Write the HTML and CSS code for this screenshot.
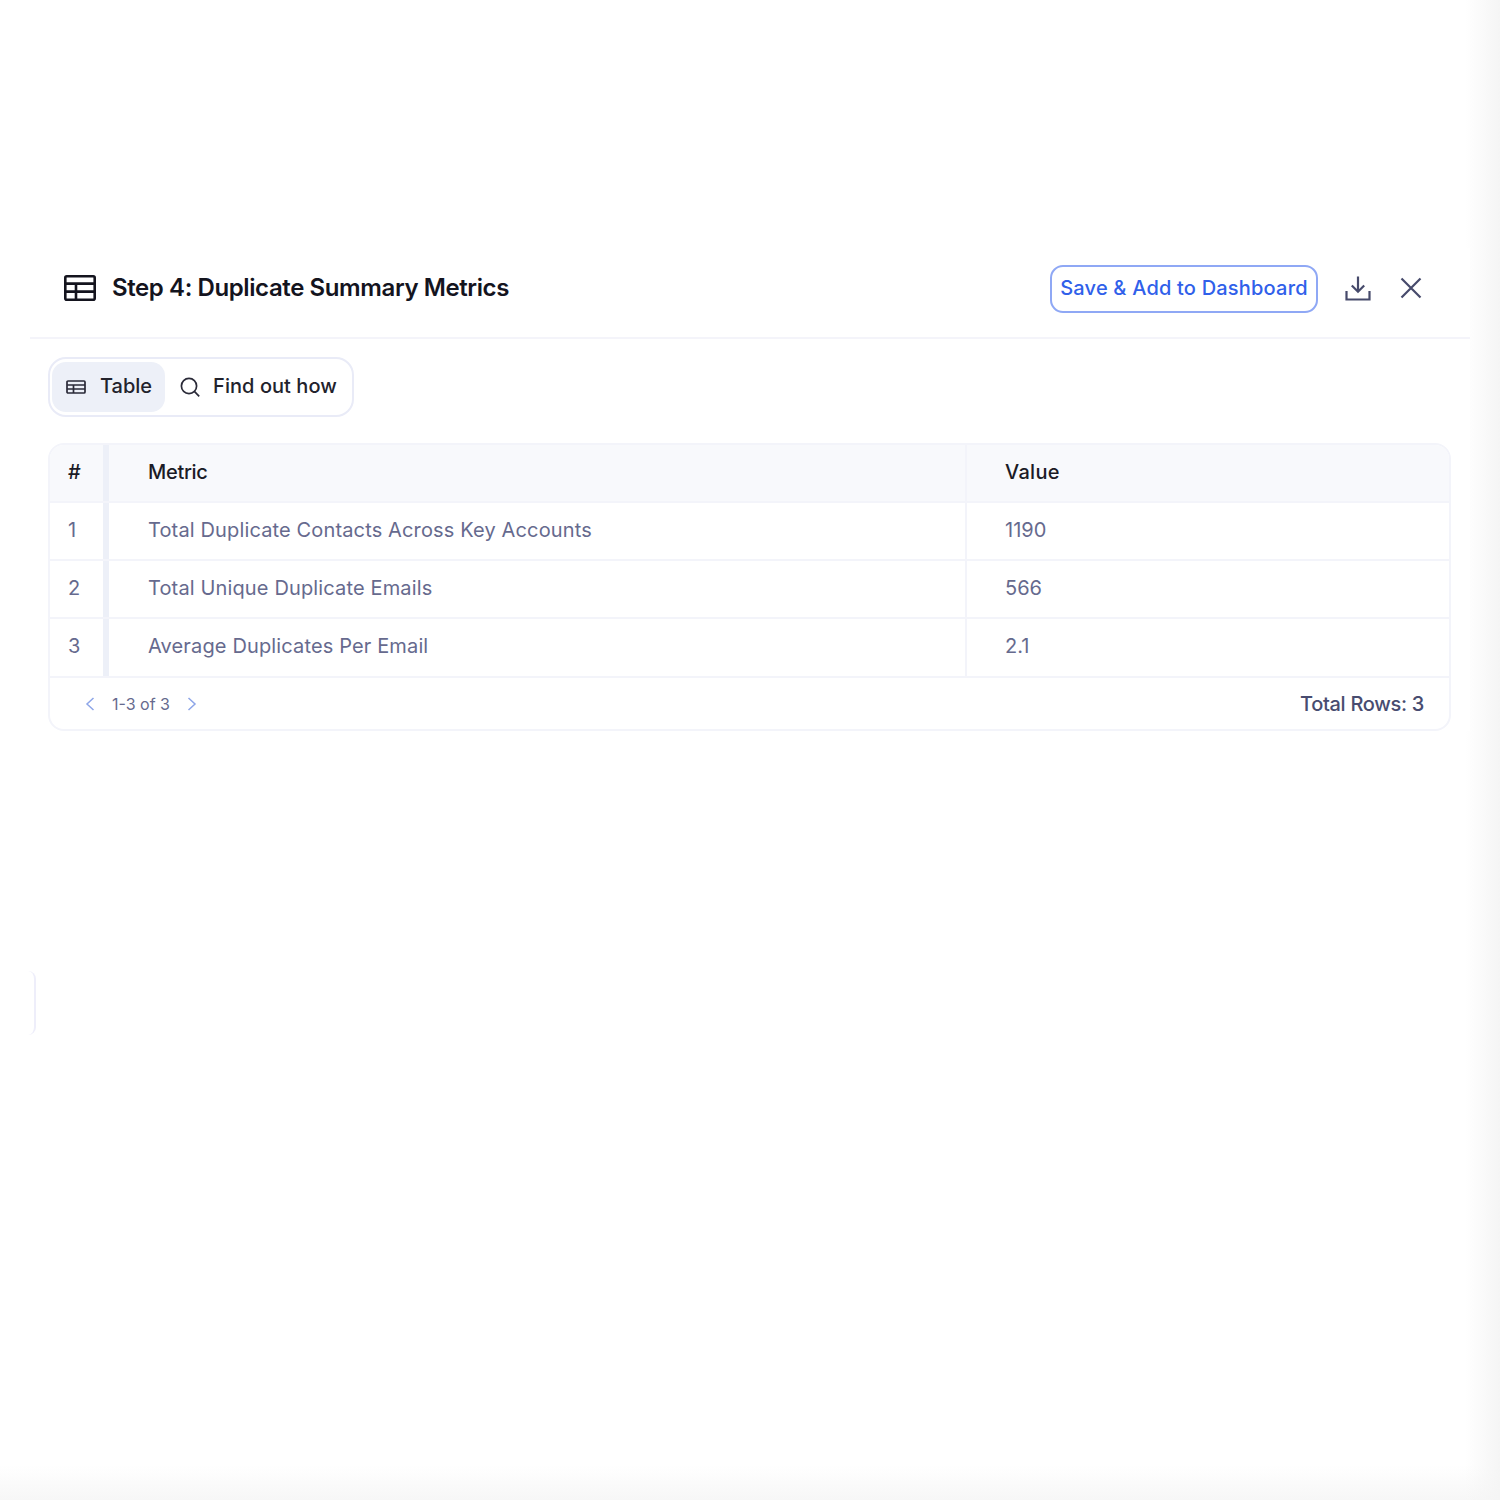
FILE: index.html
```html
<!DOCTYPE html>
<html lang="en">
<head>
<meta charset="utf-8">
<title>Step 4: Duplicate Summary Metrics</title>
<link rel="stylesheet" href="styles.css">
</head>
<body>
<div class="page">
  <span class="edge-tab"></span>
  <section class="panel">
    <header class="head">
      <div class="head-title">
        <svg class="title-icon" viewBox="0 0 32 26" width="32" height="26" fill="none" stroke="#14141e" stroke-width="2.6" stroke-linejoin="round"><rect x="1.3" y="1.3" width="29.4" height="23.4" rx="1.5"/><path d="M1.3 8.6H30.7M1.3 16.6H30.7M12 8.6V24.7"/></svg>
        <h1 class="title">Step 4: Duplicate Summary Metrics</h1>
      </div>
      <div class="head-actions">
        <button class="save">Save &amp; Add to Dashboard</button>
        <svg class="dl" viewBox="0 0 26 26" width="26" height="26" fill="none" stroke="#464a6b" stroke-width="2.2"><path d="M13 1.5V16.5M6.8 10.5L13 16.8L19.2 10.5"/><path d="M1.5 16V24.5H24.5V16"/></svg>
        <svg class="close" viewBox="0 0 22 22" width="22" height="22" fill="none" stroke="#464a6b" stroke-width="2.2"><path d="M1.5 1.5L20.5 20.5M20.5 1.5L1.5 20.5"/></svg>
      </div>
    </header>
    <div class="body">
      <nav class="tabs">
        <div class="tab tab-on">
          <svg viewBox="0 0 20 14" width="20" height="14" fill="none" stroke="#2a2a38" stroke-width="1.7" stroke-linejoin="round"><rect x="1" y="1" width="18" height="12" rx="1"/><path d="M1 5H19M1 9H19M7.5 5V13"/></svg>
          <span>Table</span>
        </div>
        <div class="tab tab-off">
          <svg viewBox="0 0 20 20" width="20" height="20" fill="none" stroke="#2a2a38" stroke-width="1.7"><circle cx="9" cy="9" r="7.6"/><path d="M14.6 14.6L19.2 19.4"/></svg>
          <span>Find out how</span>
        </div>
      </nav>
      <div class="table">
        <div class="row row-head">
          <div class="c c-num">#</div><div class="c c-metric">Metric</div><div class="c c-value">Value</div>
        </div>
        <div class="row">
          <div class="c c-num">1</div><div class="c c-metric">Total Duplicate Contacts Across Key Accounts</div><div class="c c-value">1190</div>
        </div>
        <div class="row">
          <div class="c c-num">2</div><div class="c c-metric">Total Unique Duplicate Emails</div><div class="c c-value">566</div>
        </div>
        <div class="row row-last">
          <div class="c c-num">3</div><div class="c c-metric">Average Duplicates Per Email</div><div class="c c-value">2.1</div>
        </div>
        <footer class="foot">
          <div class="pager">
            <svg viewBox="0 0 10 14" width="10" height="14" fill="none" stroke="#8ea6e8" stroke-width="1.5"><path d="M8.5 1L2 7L8.5 13"/></svg>
            <span>1-3 of 3</span>
            <svg viewBox="0 0 10 14" width="10" height="14" fill="none" stroke="#8ea6e8" stroke-width="1.5"><path d="M1.5 1L8 7L1.5 13"/></svg>
          </div>
          <div class="total">Total Rows: 3</div>
        </footer>
      </div>
    </div>
  </section>
</div>
</body>
</html>
```
FILE: styles.css
```css
* { box-sizing: border-box; }
html, body { margin: 0; padding: 0; }
body { font-family: Inter, "Liberation Sans", sans-serif; background: #fff; }
.page {
  position: relative;
  width: 1500px;
  height: 1500px;
  padding: 248px 30px 0;
  background:
    linear-gradient(to right, rgba(245,245,245,0) 1465px, #f5f5f5 1500px),
    linear-gradient(to bottom, rgba(245,245,245,0) 1465px, #f7f7f7 1500px),
    #fff;
  overflow: hidden;
}
.edge-tab {
  position: absolute;
  left: 24px;
  top: 971px;
  width: 12px;
  height: 64px;
  border-right: 2px solid #eeeefa;
  border-radius: 0 8px 8px 0;
}
.panel { background: #fff; }
.head {
  display: flex;
  align-items: center;
  justify-content: space-between;
  height: 91px;
  padding: 0 48px 8px 34px;
  border-bottom: 2px solid #f4f4fa;
}
.head-title { display: flex; align-items: center; gap: 16px; }
.title-icon { display: block; margin-bottom: 1px; }
.title { margin: 0 0 2px; font-size: 24px; font-weight: 600; color: #14141e; letter-spacing: -0.4px; white-space: nowrap; }
.head-actions { display: flex; align-items: center; }
.save {
  width: 268px;
  height: 48px;
  padding: 0 0 2px;
  background: #fff;
  border: 2px solid #8fa8f5;
  border-radius: 13px;
  color: #3060ea;
  font: 500 20px Inter, "Liberation Sans", sans-serif;
  letter-spacing: 0.2px;
  white-space: nowrap;
}
.dl { margin: 0 0 2px 27px; }
.close { margin: 0 0 2px 29px; }
.body { padding: 18px 19px 0 18px; }
.tabs {
  display: flex;
  width: 306px;
  height: 60px;
  padding: 3px 2px;
  background: #fff;
  border: 2px solid #e9ebf7;
  border-radius: 18px;
}
.tab {
  display: flex;
  align-items: center;
  height: 100%;
  font-size: 20px;
  font-weight: 500;
  color: #22222c;
  border-radius: 14px;
  white-space: nowrap;
}
.tab-on { gap: 14px; padding: 0 13px 2px 14px; background: #edf0f8; }
.tab-off { gap: 13px; padding: 0 0 2px 15px; letter-spacing: 0.05px; }
.tab svg { margin-top: 2px; }
.table {
  margin-top: 26px;
  width: 1403px;
  border: 2px solid #f3f4fa;
  border-radius: 16px;
  overflow: hidden;
}
.row {
  display: grid;
  grid-template-columns: 59px 858px 1fr;
  height: 58px;
  border-bottom: 2px solid #f3f4fa;
  font-size: 20px;
  color: #666a8e;
}
.row-last { height: 59px; }
.row-head { background: #f8f9fc; color: #1b1b26; font-weight: 500; }
.c { display: flex; align-items: center; padding-bottom: 3px; }
.c-num { padding-left: 18px; border-right: 6px solid #edf0f8; }
.c-metric { padding-left: 39px; border-right: 2px solid #f3f4fa; letter-spacing: 0.14px; }
.c-value { padding-left: 38px; }
.row-head .c-metric { letter-spacing: -0.3px; }
.row-head .c-value { letter-spacing: 0.3px; }
.foot {
  display: flex;
  align-items: center;
  justify-content: space-between;
  height: 51px;
  padding: 0 25px 0 35px;
}
.pager { display: flex; align-items: center; gap: 17px; font-size: 16px; color: #666a8e; }
.total { font-size: 20px; font-weight: 500; color: #484c70; letter-spacing: -0.3px; }
```
